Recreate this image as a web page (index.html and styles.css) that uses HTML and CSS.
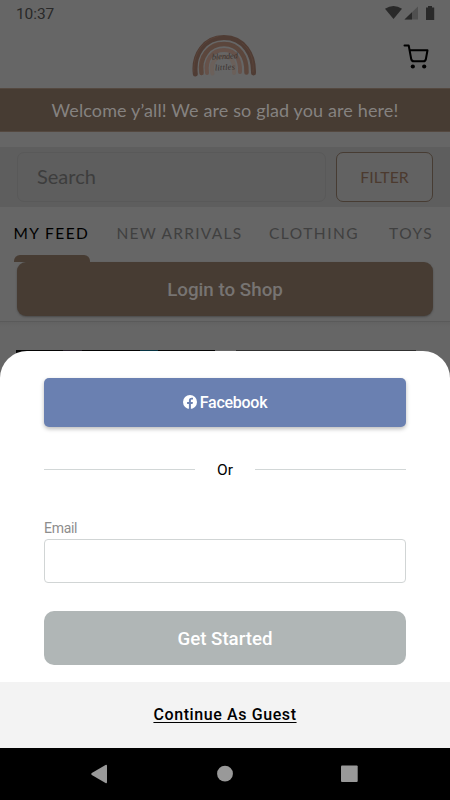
FILE: index.html
```html
<!DOCTYPE html>
<html lang="en">
<head>
<meta charset="utf-8">
<title>Blended Littles</title>
<link rel="stylesheet" href="styles.css">
</head>
<body>
<div class="phone">
  <main class="shop">
    <div class="status">
      <span>10:37</span>
      <svg width="52" height="16" viewBox="0 0 52 16">
        <path d="M0 3.800Q8.500-1.700 17 3.800L8.500 14z" fill="#292929"/>
        <path d="M19.500 14.500L33 1.500v13z" fill="#505050"/>
        <path d="M19.500 14.500L27 7.200v7.300z" fill="#292929"/>
        <path d="M41 2.500h2V1h4v1.500h2.200V15H41z" fill="#292929"/>
      </svg>
    </div>
    <header class="brand">
      <svg class="logo" width="66" height="44" viewBox="0 0 66 44" fill="none" stroke-linecap="round">
        <path d="M3.300 39C1 20 12 2.500 32 2.500S62 20 61.500 38" stroke="#4f3c34" stroke-width="5"/>
        <path d="M9.500 38C7 22 17 9 32 9S55 22 54.500 37.500" stroke="#5b463c" stroke-width="4.500"/>
        <path d="M15 38C13 25 20 15 32 15S48.500 25 48 37" stroke="#66524a" stroke-width="4"/>
        <path d="M20.500 38.500C18 28 23 21.500 32 21.500S43 29 42 38" stroke="#6b605a" stroke-width="4"/>
        <path d="M1.800 37C1 21 9 5 26 1.500M7.500 35C7 21 15 9 27 7.500M50 8C60 15 62 28 61 37" stroke="#62493e" stroke-width="1" opacity=".5"/>
        <text x="33" y="24" transform="rotate(-3 33 24)" textLength="26">blended</text>
        <text x="33" y="35" transform="rotate(-3 33 35)" textLength="20">littles</text>
      </svg>
      <svg class="cart" width="26" height="26" viewBox="0 0 26 26" fill="none" stroke="#000" stroke-width="2" stroke-linejoin="round" stroke-linecap="round">
        <path d="M1.500 1.500H5.700L8.200 15Q8.600 17.300 10.800 17.300H20.500Q22.500 17.300 22.900 15L24.500 6.300H6.700"/>
        <circle cx="9.800" cy="22.500" r="2.100" fill="#000" stroke="none"/>
        <circle cx="21.200" cy="22.500" r="2.100" fill="#000" stroke="none"/>
      </svg>
    </header>
    <div class="welcome"><span>Welcome y’all! We are so glad you are here!</span></div>
    <div class="search-row">
      <div class="search">Search</div>
      <div class="filter">FILTER</div>
    </div>
    <nav class="tabs">
      <span class="tab active">MY FEED</span>
      <span class="tab arrivals">NEW ARRIVALS</span>
      <span class="tab clothing">CLOTHING</span>
      <span class="tab toys">TOYS</span>
    </nav>
    <div class="indicator"></div>
    <div class="login-row"><div class="login">Login to Shop</div></div>
    <div class="feed"><div class="photo"></div></div>
  </main>
  <section class="sheet">
    <div class="form">
      <div class="facebook">
        <svg width="14" height="14" viewBox="0 0 14 14">
          <circle cx="7" cy="7" r="7" fill="#fff"/>
          <path d="M5.900 14V9.100H4.100V7h1.800V5.500c0-1.900 1-2.800 2.700-2.800l1.400.1v1.800H9c-.8 0-1.100.4-1.100 1.100V7h2l-.3 2.100H7.900V14z" fill="#6a80b1"/>
        </svg>
        <span>Facebook</span>
      </div>
      <div class="or"><i></i><span>Or</span><i></i></div>
      <div class="label">Email</div>
      <div class="input"></div>
      <div class="start">Get Started</div>
    </div>
    <div class="guest"><span>Continue As Guest</span></div>
  </section>
  <footer class="system">
    <svg width="450" height="52" viewBox="0 0 450 52" fill="#999">
      <path d="M91.800 25L105.500 17Q107 16.300 107 18V34Q107 35.700 105.500 35L91.800 27Q90.500 26 91.800 25z"/>
      <circle cx="225" cy="25.700" r="7.900"/>
      <rect x="341" y="17.500" width="16.700" height="16.500" rx="1"/>
    </svg>
  </footer>
</div>
</body>
</html>
```
FILE: styles.css
```css
* { box-sizing: border-box; }
body { margin: 0; font-family: Roboto, sans-serif; }
svg { display: block; flex: none; }
.phone { position: relative; width: 450px; height: 800px; overflow: hidden; background: #666; display: flex; flex-direction: column; }
.shop { height: 748px; display: flex; flex-direction: column; font-family: Lato, sans-serif; }
.status { height: 28px; flex: none; display: flex; justify-content: space-between; padding: 5px 13px 0 16px; font: 15.5px/18px Roboto, sans-serif; color: #292929; letter-spacing: -.1px; }
.brand { height: 60px; flex: none; display: flex; justify-content: space-between; padding: 7px 21px 0 192px; }
.logo text { font: italic 8.5px "Liberation Serif", serif; fill: #3a322f; text-anchor: middle; }
.cart { margin-top: 9px; }
.welcome { height: 44px; flex: none; background: #473c33; border-top: 1px solid #54483f; border-bottom: 1px solid #54483f; color: #858280; text-align: center; font-size: 18px; line-height: 42px; letter-spacing: .13px; }
.search-row { height: 60px; flex: none; margin-top: 15px; padding: 5px 17px; background: #5e5e5e; display: flex; gap: 10px; }
.search { width: 309px; border: 1px solid #595959; border-radius: 7px; padding-left: 19px; color: #3d3d3d; font-size: 20px; line-height: 46px; letter-spacing: 0; }
.filter { width: 97px; border: 1px solid #473c33; border-radius: 7px; background: #626262; color: #4c3a2f; text-align: center; font-size: 15.8px; line-height: 47px; }
.tabs { height: 48px; flex: none; padding-left: 13.5px; display: flex; color: #404040; font-size: 15.5px; line-height: 53px; letter-spacing: 1.5px; white-space: nowrap; }
.active { width: 103px; color: #000; letter-spacing: 1.4px; }
.arrivals { width: 152.5px; letter-spacing: 1.25px; }
.clothing { width: 120px; }
.indicator { width: 76px; height: 7px; flex: none; margin-left: 13.5px; border-radius: 6px 6px 0 0; background: #473c33; }
.login-row { height: 60px; flex: none; padding: 0 17px; border-bottom: 1px solid #5a5a5a; }
.login { height: 54px; border-radius: 9px; background: #473c33; box-shadow: 0 1px 2px #4a4a4a; color: #777472; text-align: center; font: 500 18.8px/56px Roboto, sans-serif; }
.feed { padding-top: 28px; flex: 1; background: linear-gradient(#626262, #666 5px); }
.photo { height: 30px; margin: 0 16px; background: linear-gradient(90deg, #050505 0 47px, #251f29 47px 66px, #030303 66px 124px, #063443 124px 142px, #050505 142px 199px, #666 199px 220px, #303030 220px 400px, #666 400px); }
.sheet { position: absolute; top: 351px; left: 0; width: 450px; height: 396.5px; border-radius: 27px 27px 0 0; overflow: hidden; background: #fff; }
.form { height: 331px; padding: 26.5px 44px 0; }
.facebook { height: 49px; display: flex; align-items: center; justify-content: center; gap: 3px; border-radius: 5px; background: #6a80b1; color: #fff; box-shadow: 0 2px 4px #0004; font-size: 16px; font-weight: 500; }
.facebook span { padding-top: 1px; letter-spacing: -.25px; }
.or { display: flex; align-items: center; justify-content: space-between; height: 20px; margin-top: 32.5px; font-size: 15.5px; }
.or i { width: 151px; height: 1px; background: #d2d7d7; }
.or span { padding-top: 2px; }
.label { margin-top: 40px; height: 20px; line-height: 18px; font-size: 14px; letter-spacing: -.3px; color: #8d8d8d; }
.input { height: 44px; margin: 0 0 0; border: 1px solid #d1d5d5; border-radius: 4px; }
.start { height: 54px; margin-top: 28px; border-radius: 10px; background: #b0b6b6; color: #fff; text-align: center; font-weight: 500; font-size: 18.7px; line-height: 56px; }
.guest { height: 66px; background: #f3f3f3; text-align: center; font-size: 16px; line-height: 65px; font-weight: 500; letter-spacing: .6px; color: #000; }
.guest span { text-decoration: underline; text-decoration-thickness: 1px; text-underline-offset: 2px; text-decoration-skip-ink: none; }
.system { height: 52px; background: #000; }
```
